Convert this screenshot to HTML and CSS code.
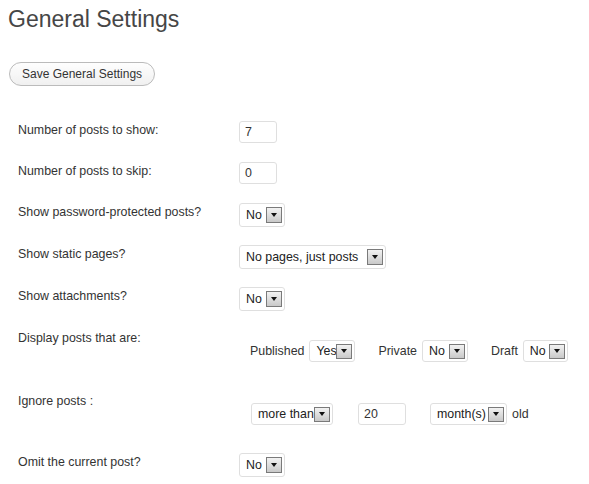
FILE: index.html
```html
<!DOCTYPE html>
<html>
<head>
<meta charset="utf-8">
<link rel="stylesheet" href="styles.css">
</head>
<body>
<h1 class="title">General Settings</h1>
<button class="save-btn">Save General Settings</button>
<div class="settings">
  <div class="row">
    <div class="label">Number of posts to show:</div>
    <div class="field"><span class="input w38">7</span></div>
  </div>
  <div class="row">
    <div class="label">Number of posts to skip:</div>
    <div class="field"><span class="input w38">0</span></div>
  </div>
  <div class="row row-sel">
    <div class="label">Show password-protected posts?</div>
    <div class="field"><span class="select w46"><span class="val">No</span><span class="arrow"></span></span></div>
  </div>
  <div class="row row-sel">
    <div class="label">Show static pages?</div>
    <div class="field"><span class="select w147"><span class="val">No pages, just posts</span><span class="arrow"></span></span></div>
  </div>
  <div class="row row-sel">
    <div class="label">Show attachments?</div>
    <div class="field"><span class="select w46"><span class="val">No</span><span class="arrow"></span></span></div>
  </div>
  <div class="row row-display">
    <div class="label">Display posts that are:</div>
    <div class="field inline-fields pub">
      <span class="txt">Published</span>
      <span class="select small w46"><span class="val">Yes</span><span class="arrow"></span></span>
      <span class="txt gap">Private</span>
      <span class="select small w46"><span class="val">No</span><span class="arrow"></span></span>
      <span class="txt gap">Draft</span>
      <span class="select small w45"><span class="val">No</span><span class="arrow"></span></span>
    </div>
  </div>
  <div class="row row-ignore">
    <div class="label">Ignore posts :</div>
    <div class="field inline-fields ign">
      <span class="select small w82"><span class="val">more than</span><span class="arrow"></span></span>
      <span class="input small w48 gap2">20</span>
      <span class="select small w77 gap3"><span class="val">month(s)</span><span class="arrow"></span></span>
      <span class="txt">old</span>
    </div>
  </div>
  <div class="row row-sel">
    <div class="label">Omit the current post?</div>
    <div class="field"><span class="select w46"><span class="val">No</span><span class="arrow"></span></span></div>
  </div>
</div>
</body>
</html>
```

FILE: styles.css
```css
html, body {
  margin: 0;
  padding: 0;
  background: #fff;
}
body {
  padding: 0 8px;
  font-family: "Liberation Sans", Arial, sans-serif;
  color: #333;
}
.title {
  margin: 4px 0 0 0;
  font-size: 23px;
  line-height: 30px;
  font-weight: normal;
  color: #464646;
}
.save-btn {
  display: block;
  margin: 28px 0 0 1px;
  height: 24px;
  padding: 0 12px;
  border: 1px solid #bbb;
  border-radius: 12px;
  background: linear-gradient(#fefefe, #f0f0f0);
  font-family: "Liberation Sans", Arial, sans-serif;
  font-size: 12px;
  color: #333;
  line-height: 22px;
}
.settings {
  margin-top: 35px;
  padding-left: 10px;
}
.row {
  display: grid;
  grid-template-columns: 221px 1fr;
  align-items: start;
  padding-bottom: 19px;
  font-size: 12.4px;
}
.row-sel {
  padding-bottom: 18px;
}
.label {
  line-height: 18px;
  color: #333;
}
.field {
  display: flex;
  align-items: center;
}
.input {
  display: inline-flex;
  align-items: center;
  box-sizing: border-box;
  height: 22px;
  padding-left: 5px;
  border: 1px solid #dfdfdf;
  border-radius: 3px;
  background: #fff;
  color: #333;
}
.select {
  display: inline-flex;
  align-items: center;
  box-sizing: border-box;
  height: 24px;
  padding: 0 2px 0 6px;
  border: 1px solid #dfdfdf;
  border-radius: 3px;
  background: #fff;
  color: #222;
}
.select.small, .input.small {
  height: 22px;
}
.select .val {
  flex: 1;
  white-space: nowrap;
  overflow: hidden;
}
.arrow {
  flex: none;
  box-sizing: border-box;
  width: 16px;
  height: 16px;
  border: 1px solid #7a7a7a;
  background: linear-gradient(#f2f2f2, #c9c9c9);
  display: flex;
  align-items: center;
  justify-content: center;
}
.arrow::after {
  content: "";
  width: 0;
  height: 0;
  border-left: 3.5px solid transparent;
  border-right: 3.5px solid transparent;
  border-top: 4px solid #111;
}
.w38 { width: 38px; }
.w45 { width: 45px; }
.w46 { width: 46px; }
.w48 { width: 48px; }
.w77 { width: 77px; }
.w82 { width: 82px; }
.w147 { width: 147px; }
.small .arrow {
  height: 15px;
}
.row-display {
  padding-bottom: 30px;
}
.row-ignore {
  padding-bottom: 28px;
}
.inline-fields {
  padding-top: 11px;
}
.pub {
  padding-left: 11px;
}
.pub .txt {
  margin-right: 5px;
}
.pub .gap {
  margin-left: 23px;
}
.ign {
  padding-left: 12px;
}
.gap2 { margin-left: 25px; }
.gap3 { margin-left: 24px; margin-right: 5px; }
```
